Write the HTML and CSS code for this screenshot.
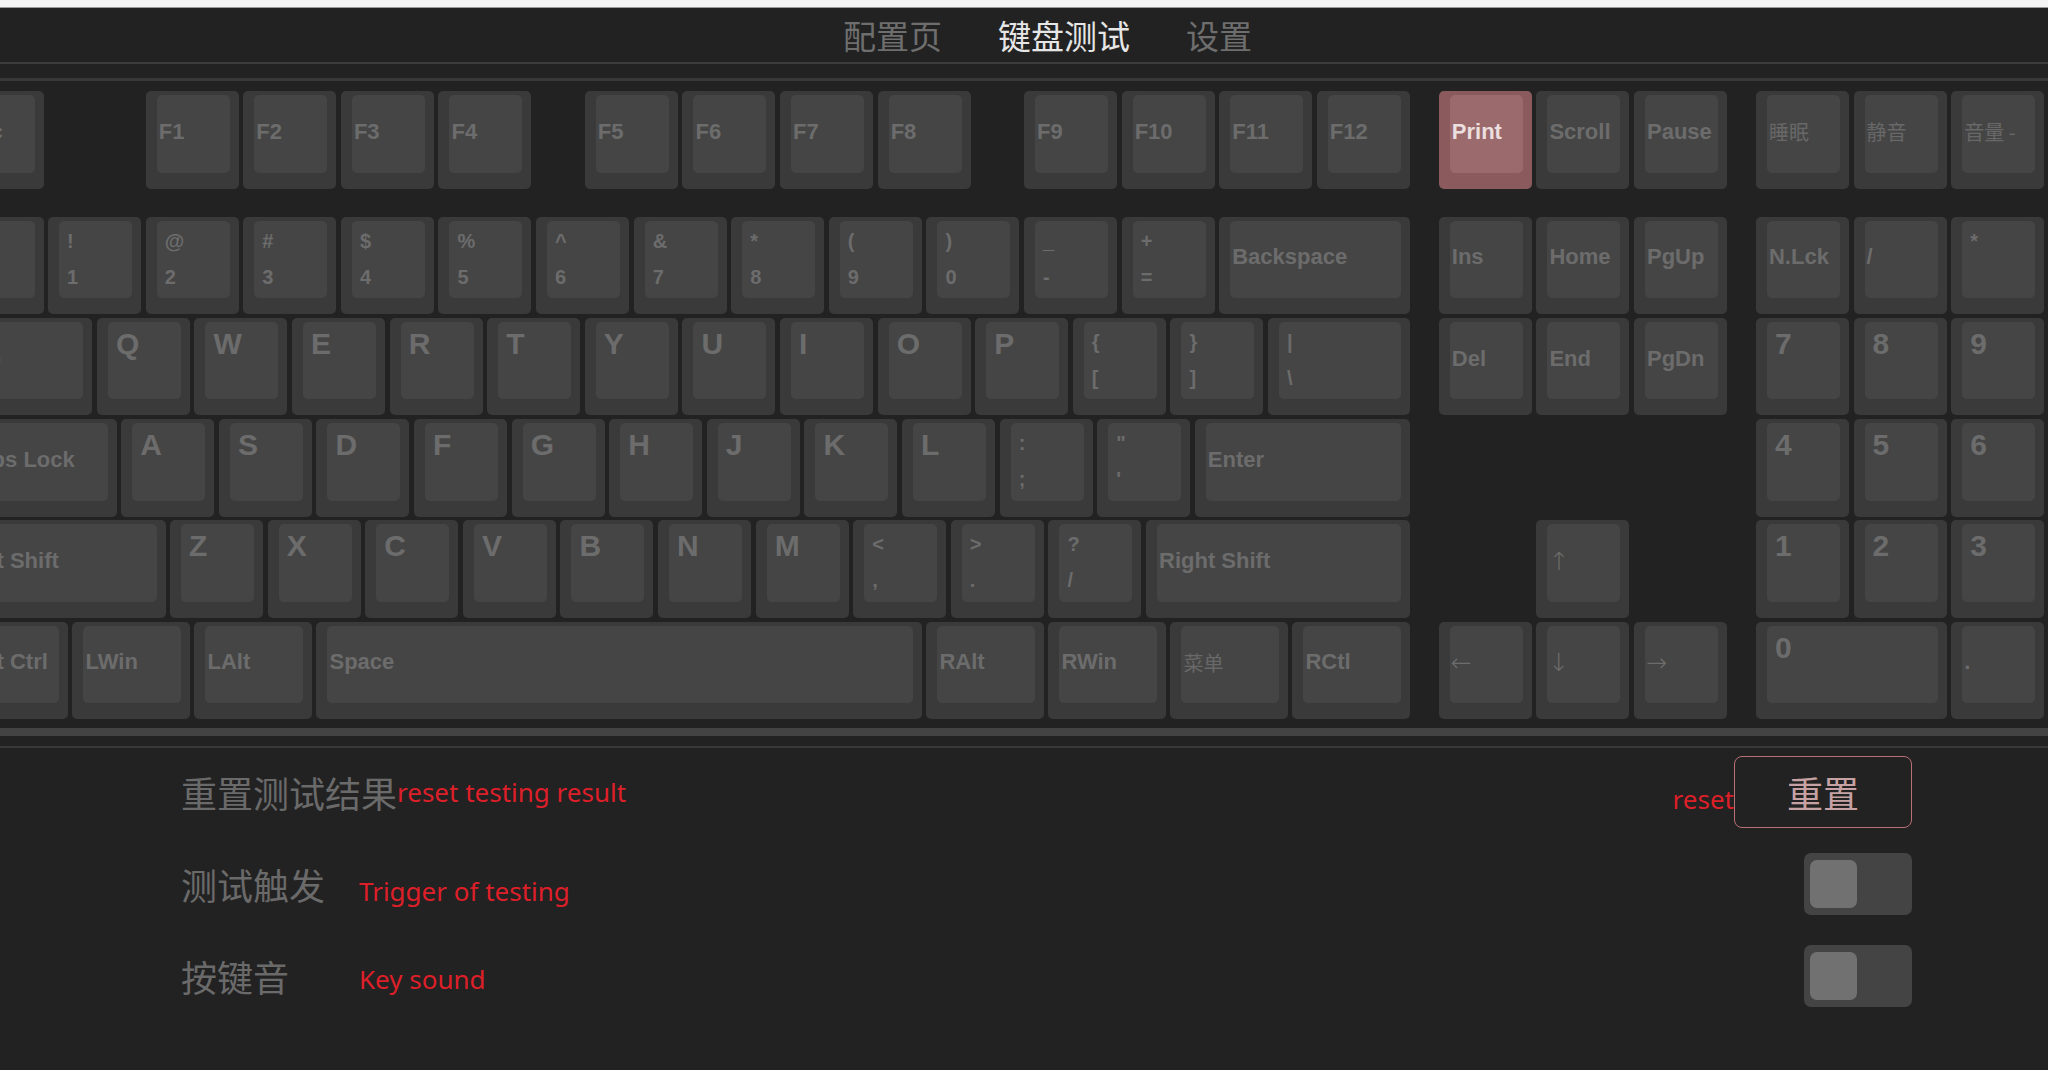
FILE: index.html
```html
<!DOCTYPE html>
<html lang="zh-CN">
<head>
<meta charset="utf-8">
<title>键盘测试</title>
<link rel="stylesheet" href="styles.css">
</head>
<body>
<div class="topbar"></div>
<nav class="nav">
  <span class="tab">配置页</span>
  <span class="tab active">键盘测试</span>
  <span class="tab">设置</span>
</nav>
<div class="rule1"></div>
<div class="rule2"></div>

<div class="kb">
  <div class="row frow">
    <div class="k w1"><div class="c l">Esc</div></div>
    <div class="sp1"></div>
    <div class="k w1"><div class="c l">F1</div></div>
    <div class="k w1"><div class="c l">F2</div></div>
    <div class="k w1"><div class="c l">F3</div></div>
    <div class="k w1"><div class="c l">F4</div></div>
    <div class="sp05"></div>
    <div class="k w1"><div class="c l">F5</div></div>
    <div class="k w1"><div class="c l">F6</div></div>
    <div class="k w1"><div class="c l">F7</div></div>
    <div class="k w1"><div class="c l">F8</div></div>
    <div class="sp05"></div>
    <div class="k w1"><div class="c l">F9</div></div>
    <div class="k w1"><div class="c l">F10</div></div>
    <div class="k w1"><div class="c l">F11</div></div>
    <div class="k w1"><div class="c l">F12</div></div>
    <div class="sp025"></div>
    <div class="k w1 hot"><div class="c l">Print</div></div>
    <div class="k w1"><div class="c l">Scroll</div></div>
    <div class="k w1"><div class="c l">Pause</div></div>
    <div class="sp025"></div>
    <div class="k w1"><div class="c l cj">睡眠</div></div>
    <div class="k w1"><div class="c l cj">静音</div></div>
    <div class="k w1"><div class="c l cj">音量 -</div></div>
    <div class="k w1"><div class="c l cj"></div></div>
  </div>

  <div class="row">
    <div class="k w1"><div class="c d"></div></div>
    <div class="k w1"><div class="c d">!<br>1</div></div>
    <div class="k w1"><div class="c d">@<br>2</div></div>
    <div class="k w1"><div class="c d">#<br>3</div></div>
    <div class="k w1"><div class="c d">$<br>4</div></div>
    <div class="k w1"><div class="c d">%<br>5</div></div>
    <div class="k w1"><div class="c d">^<br>6</div></div>
    <div class="k w1"><div class="c d">&amp;<br>7</div></div>
    <div class="k w1"><div class="c d">*<br>8</div></div>
    <div class="k w1"><div class="c d">(<br>9</div></div>
    <div class="k w1"><div class="c d">)<br>0</div></div>
    <div class="k w1"><div class="c d">_<br>-</div></div>
    <div class="k w1"><div class="c d">+<br>=</div></div>
    <div class="k w2"><div class="c l">Backspace</div></div>
    <div class="sp025"></div>
    <div class="k w1"><div class="c l">Ins</div></div>
    <div class="k w1"><div class="c l">Home</div></div>
    <div class="k w1"><div class="c l">PgUp</div></div>
    <div class="sp025"></div>
    <div class="k w1"><div class="c l">N.Lck</div></div>
    <div class="k w1"><div class="c l">/</div></div>
    <div class="k w1"><div class="c d">*</div></div>
    <div class="k w1"><div class="c l"></div></div>
  </div>

  <div class="row">
    <div class="k w15"><div class="c l">Tab</div></div>
    <div class="k w1"><div class="c ch">Q</div></div>
    <div class="k w1"><div class="c ch">W</div></div>
    <div class="k w1"><div class="c ch">E</div></div>
    <div class="k w1"><div class="c ch">R</div></div>
    <div class="k w1"><div class="c ch">T</div></div>
    <div class="k w1"><div class="c ch">Y</div></div>
    <div class="k w1"><div class="c ch">U</div></div>
    <div class="k w1"><div class="c ch">I</div></div>
    <div class="k w1"><div class="c ch">O</div></div>
    <div class="k w1"><div class="c ch">P</div></div>
    <div class="k w1"><div class="c d">{<br>[</div></div>
    <div class="k w1"><div class="c d">}<br>]</div></div>
    <div class="k w15"><div class="c d">|<br>\</div></div>
    <div class="sp025"></div>
    <div class="k w1"><div class="c l">Del</div></div>
    <div class="k w1"><div class="c l">End</div></div>
    <div class="k w1"><div class="c l">PgDn</div></div>
    <div class="sp025"></div>
    <div class="k w1"><div class="c ch">7</div></div>
    <div class="k w1"><div class="c ch">8</div></div>
    <div class="k w1"><div class="c ch">9</div></div>
    <div class="k w1"><div class="c ch"></div></div>
  </div>

  <div class="row">
    <div class="k w175"><div class="c l">Caps Lock</div></div>
    <div class="k w1"><div class="c ch">A</div></div>
    <div class="k w1"><div class="c ch">S</div></div>
    <div class="k w1"><div class="c ch">D</div></div>
    <div class="k w1"><div class="c ch">F</div></div>
    <div class="k w1"><div class="c ch">G</div></div>
    <div class="k w1"><div class="c ch">H</div></div>
    <div class="k w1"><div class="c ch">J</div></div>
    <div class="k w1"><div class="c ch">K</div></div>
    <div class="k w1"><div class="c ch">L</div></div>
    <div class="k w1"><div class="c d">:<br>;</div></div>
    <div class="k w1"><div class="c d">"<br>'</div></div>
    <div class="k w225"><div class="c l">Enter</div></div>
    <div class="sp35"></div>
    <div class="k w1"><div class="c ch">4</div></div>
    <div class="k w1"><div class="c ch">5</div></div>
    <div class="k w1"><div class="c ch">6</div></div>
  </div>

  <div class="row">
    <div class="k w225"><div class="c l">Left Shift</div></div>
    <div class="k w1"><div class="c ch">Z</div></div>
    <div class="k w1"><div class="c ch">X</div></div>
    <div class="k w1"><div class="c ch">C</div></div>
    <div class="k w1"><div class="c ch">V</div></div>
    <div class="k w1"><div class="c ch">B</div></div>
    <div class="k w1"><div class="c ch">N</div></div>
    <div class="k w1"><div class="c ch">M</div></div>
    <div class="k w1"><div class="c d">&lt;<br>,</div></div>
    <div class="k w1"><div class="c d">&gt;<br>.</div></div>
    <div class="k w1"><div class="c d">?<br>/</div></div>
    <div class="k w275"><div class="c l">Right Shift</div></div>
    <div class="sp125"></div>
    <div class="k w1"><div class="c l ar">↑</div></div>
    <div class="sp125"></div>
    <div class="k w1"><div class="c ch">1</div></div>
    <div class="k w1"><div class="c ch">2</div></div>
    <div class="k w1"><div class="c ch">3</div></div>
  </div>

  <div class="row">
    <div class="k w125"><div class="c l">Left Ctrl</div></div>
    <div class="k w125"><div class="c l">LWin</div></div>
    <div class="k w125"><div class="c l">LAlt</div></div>
    <div class="k w625"><div class="c l">Space</div></div>
    <div class="k w125"><div class="c l">RAlt</div></div>
    <div class="k w125"><div class="c l">RWin</div></div>
    <div class="k w125"><div class="c l cj">菜单</div></div>
    <div class="k w125"><div class="c l">RCtl</div></div>
    <div class="sp025"></div>
    <div class="k w1"><div class="c l ar">←</div></div>
    <div class="k w1"><div class="c l ar">↓</div></div>
    <div class="k w1"><div class="c l ar">→</div></div>
    <div class="sp025"></div>
    <div class="k w2"><div class="c ch">0</div></div>
    <div class="k w1"><div class="c l">.</div></div>
  </div>
</div>

<div class="band"></div>
<div class="rule3"></div>

<section class="settings">
  <div class="srow">
    <div class="sl"><span class="lab">重置测试结果</span><span class="note">reset testing result</span></div>
    <div class="sr"><span class="note reset">reset</span><button class="btn">重置</button></div>
  </div>
  <div class="srow">
    <div class="sl"><span class="lab">测试触发</span><span class="note n2">Trigger of testing</span></div>
    <div class="tog"><div class="knob"></div></div>
  </div>
  <div class="srow">
    <div class="sl"><span class="lab">按键音</span><span class="note n3">Key sound</span></div>
    <div class="tog"><div class="knob"></div></div>
  </div>
</section>
</body>
</html>
```

FILE: styles.css
```css
:root {
  --u: 97.6px;
  --g: 4.6px;
}

html, body {
  margin: 0;
  padding: 0;
  background: #222222;
  width: 2048px;
  height: 1070px;
  overflow: hidden;
}

.topbar {
  height: 7px;
  background: #f4f4f4;
  border-bottom: 1px solid #9a9a9a;
}

.nav {
  height: 54px;
  display: flex;
  justify-content: center;
  align-items: center;
  gap: 56px;
  padding-left: 47px;
  box-sizing: border-box;
  font-family: "Noto Sans CJK SC", sans-serif;
  font-size: 33px;
  color: #6e6e6e;
}

.nav .active {
  color: #e6e6e6;
}

.rule1 {
  height: 2px;
  background: #3c3c3c;
}

.rule2 {
  height: 3px;
  background: #383838;
  margin-top: 14px;
}

.kb {
  padding-top: 10px;
  margin-left: -49.5px;
  width: max-content;
}

.row {
  display: flex;
  margin-bottom: 3.8px;
}

.row.frow {
  margin-bottom: 28px;
}

.row:last-child {
  margin-bottom: 0;
}

.k {
  flex: none;
  height: 97.5px;
  margin-right: var(--g);
  background: #3a3a3a;
  border-radius: 5px;
  padding: 4px 9px 16px 11px;
  box-sizing: border-box;
}

.c {
  height: 100%;
  background: #454545;
  border-radius: 5px;
  box-sizing: border-box;
  color: #6c6c6c;
  font-family: "Liberation Sans", Arial, sans-serif;
  font-weight: bold;
  white-space: nowrap;
}

.c.l {
  display: flex;
  align-items: center;
  padding: 0 0 4px 2px;
  font-size: 22px;
}

.c.ch {
  padding: 5px 0 0 8px;
  font-size: 30px;
  line-height: normal;
}

.c.d {
  padding: 2px 0 0 8px;
  font-size: 20px;
  line-height: 36px;
}

.c.cj {
  font-family: "Noto Sans CJK SC", sans-serif;
  font-weight: normal;
  font-size: 20px;
  color: #686868;
}

.c.ar {
  font-family: "DejaVu Sans", sans-serif;
  font-weight: 200;
  font-size: 25px;
  padding-left: 1px;
}

.k.hot {
  background: #8a5a5c;
}

.k.hot .c {
  background: #9b6a6c;
  color: #ebdfdf;
}

.w1 { width: calc(var(--u) - var(--g)); }
.w125 { width: calc(var(--u) * 1.25 - var(--g)); }
.w15 { width: calc(var(--u) * 1.5 - var(--g)); }
.w175 { width: calc(var(--u) * 1.75 - var(--g)); }
.w2 { width: calc(var(--u) * 2 - var(--g)); }
.w225 { width: calc(var(--u) * 2.25 - var(--g)); }
.w275 { width: calc(var(--u) * 2.75 - var(--g)); }
.w625 { width: calc(var(--u) * 6.25 - var(--g)); }

.sp025 { flex: none; width: calc(var(--u) * 0.25); }
.sp05 { flex: none; width: calc(var(--u) * 0.5); }
.sp1 { flex: none; width: var(--u); }
.sp125 { flex: none; width: calc(var(--u) * 1.25); }
.sp35 { flex: none; width: calc(var(--u) * 3.5); }

.band {
  height: 8px;
  background: #434343;
  margin-top: 9px;
}

.rule3 {
  height: 2px;
  background: #383838;
  margin-top: 10px;
}

.settings {
  margin-top: -2px;
  padding: 0 136px 0 181px;
}

.srow {
  height: 92px;
  display: flex;
  align-items: center;
  justify-content: space-between;
}

.sl {
  display: flex;
  align-items: center;
}

.lab {
  font-family: "Noto Sans CJK SC", sans-serif;
  font-size: 36px;
  color: #6a6a6a;
  min-width: 178px;
}

.note {
  font-family: "Noto Sans", "Noto Sans CJK SC", sans-serif;
  font-size: 26px;
  color: #dd1f29;
}

.note.n2 {
  margin-top: 14px;
}

.note.n3 {
  margin-top: 5px;
}

.sr {
  display: flex;
  align-items: flex-end;
}

.reset {
  margin-bottom: 11px;
}

.btn {
  width: 178px;
  height: 72px;
  box-sizing: border-box;
  border: 1.5px solid #b87276;
  border-radius: 8px;
  background: transparent;
  color: #c7a2a4;
  font-family: "Noto Sans CJK SC", sans-serif;
  font-size: 36px;
  padding: 0;
}

.tog {
  width: 108px;
  height: 62px;
  background: #444444;
  border-radius: 7px;
  box-sizing: border-box;
  padding: 7px 0 0 6px;
}

.knob {
  width: 47px;
  height: 48px;
  background: #717171;
  border-radius: 7px;
}
```
